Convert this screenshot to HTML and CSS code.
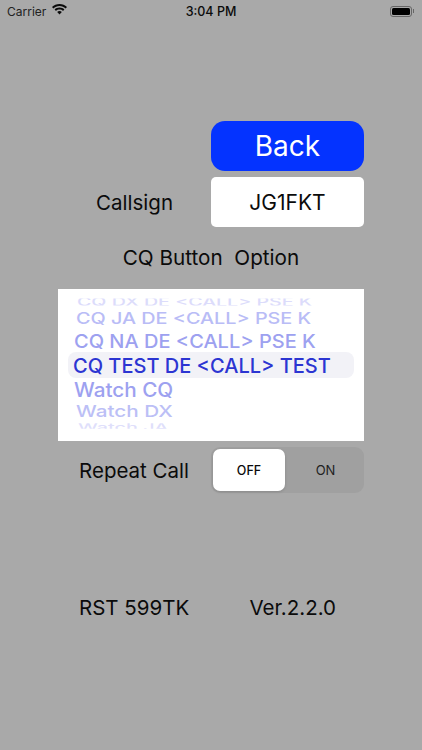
FILE: index.html
```html
<!DOCTYPE html>
<html lang="en">
<head>
    <meta charset="UTF-8">
    <meta name="viewport" content="width=device-width, initial-scale=1.0">
    <title>Settings</title>
    <link rel="stylesheet" href="styles.css">
</head>
<body>
    <div class="status">
        <div class="status-left">
            <span>Carrier</span>
            <svg class="wifi" width="15" height="11" viewBox="0 0 15 11">
                <path d="M7.500 0C4.600 0 2 1.100 0 3l1.400 1.500C3 3 5.100 2.100 7.500 2.100S12 3 13.600 4.500L15 3C13 1.100 10.400 0 7.500 0z"/>
                <path d="M7.500 3.600c-1.900 0-3.600.7-4.900 1.900l1.400 1.500c.9-.9 2.100-1.400 3.500-1.400s2.600.5 3.500 1.400l1.400-1.500C11.100 4.300 9.400 3.600 7.500 3.600z"/>
                <path d="M7.500 7.100c-.9 0-1.700.3-2.300.9l2.300 2.600L9.800 8c-.6-.6-1.400-.9-2.300-.9z"/>
            </svg>
        </div>
        <div class="status-time">3:04 PM</div>
        <div class="battery">
            <div class="battery-body"><div class="battery-fill"></div></div>
            <div class="battery-cap"></div>
        </div>
    </div>

    <div class="content">
        <div class="row row-back">
            <button class="back">Back</button>
        </div>
        <div class="row row-call">
            <div class="label label-call">Callsign</div>
            <div class="field">JG1FKT</div>
        </div>
        <div class="option-title">CQ Button&nbsp; Option</div>

        <div class="picker">
            <div class="selection"></div>
            <div class="wheel">
                <div class="item item-top3">CQ DX DE &lt;CALL&gt; PSE K</div>
                <div class="item item-top2">CQ JA DE &lt;CALL&gt; PSE K</div>
                <div class="item item-top1">CQ NA DE &lt;CALL&gt; PSE K</div>
                <div class="item item-sel">CQ TEST DE &lt;CALL&gt; TEST</div>
                <div class="item item-bot1">Watch CQ</div>
                <div class="item item-bot2">Watch DX</div>
                <div class="item item-bot3">Watch JA</div>
            </div>
        </div>

        <div class="row row-repeat">
            <div class="label label-repeat">Repeat Call</div>
            <div class="segment">
                <div class="seg seg-on">OFF</div>
                <div class="seg seg-off">ON</div>
            </div>
        </div>

        <div class="footer">
            <div>RST 599TK</div>
            <div>Ver.2.2.0</div>
        </div>
    </div>
</body>
</html>
```

FILE: styles.css
```css
*{
    padding: 0;
    margin: 0;
    box-sizing: border-box;
}
body{
    width: 422px;
    height: 750px;
    overflow: hidden;
    background-color: #a9a9a9;
    font-family: "Inter", "Liberation Sans", sans-serif;
    color: #0b0b0b;
}
.status{
    height: 22px;
    display: flex;
    justify-content: space-between;
    align-items: center;
    padding: 0 7px 0 7px;
    font-size: 12px;
    position: relative;
}
.status-left{
    display: flex;
    align-items: center;
    gap: 6px;
    color: #222;
}
.wifi{
    fill: #0b0b0b;
    margin-top: -3px;
}
.status-time{
    position: absolute;
    left: 0;
    right: 0;
    text-align: center;
    font-weight: 500;
    font-size: 12.5px;
}
.battery{
    display: flex;
    align-items: center;
    gap: 1px;
    margin-right: 1px;
}
.battery-body{
    width: 22px;
    height: 11px;
    border: 1px solid #666;
    border-radius: 3px;
    padding: 1px;
}
.battery-fill{
    height: 100%;
    background-color: #000;
    border-radius: 1.5px;
}
.battery-cap{
    width: 1px;
    height: 4px;
    background-color: #666;
}
.content{
    padding-top: 99px;
    display: flex;
    flex-direction: column;
}
.row{
    display: flex;
    align-items: center;
}
.row-back{
    justify-content: flex-end;
    padding-right: 58px;
}
.back{
    width: 153px;
    height: 50px;
    border: none;
    border-radius: 14px;
    background-color: #0433ff;
    color: #fff;
    font-family: inherit;
    font-size: 28px;
    font-weight: 400;
}
.row-call{
    margin-top: 6px;
    padding-right: 58px;
    justify-content: flex-end;
}
.label{
    font-size: 20.5px;
}
.label-call{
    margin-right: 38px;
}
.field{
    width: 153px;
    height: 50px;
    background-color: #fff;
    border-radius: 5px;
    display: flex;
    align-items: center;
    justify-content: center;
    font-size: 21px;
}
.option-title{
    margin-top: 19px;
    height: 24px;
    line-height: 24px;
    font-size: 20.7px;
    text-align: center;
}
.picker{
    position: relative;
    margin: 19px 58px 0;
    height: 152px;
    background-color: #fff;
    overflow: hidden;
}
.selection{
    position: absolute;
    left: 10px;
    right: 10px;
    top: 63px;
    height: 26px;
    border-radius: 8px;
    background-color: #f2f2f7;
}
.wheel{
    position: relative;
    padding-top: 7px;
    height: 152px;
    display: flex;
    flex-direction: column;
    font-weight: 500;
    white-space: nowrap;
}
.item{
    transform-origin: 0 50%;
    padding-left: 15px;
    font-size: 20px;
    line-height: 24px;
}
.item-top3{
    height: 12px;
    line-height: 12px;
    margin-left: 4px;
    color: #dcdcfb;
    font-size: 19.6px;
    overflow: hidden;
    transform: scaleY(.6);
}
.item-top2{
    height: 20px;
    line-height: 20px;
    margin-top: 0;
    margin-left: 3px;
    color: #b9bcf6;
    font-size: 19.8px;
    transform: scaleY(.8);
}
.item-top1{
    height: 24px;
    margin-top: 1px;
    margin-left: 1px;
    color: #9da1f0;
    font-size: 20px;
    transform: scaleY(.95);
}
.item-sel{
    height: 26px;
    line-height: 26px;
    margin-top: 0;
    color: #2c35d2;
    font-size: 20px;
}
.item-bot1{
    height: 24px;
    margin-top: -1px;
    margin-left: 1px;
    color: #9da1f0;
    font-size: 20.7px;
    transform: scaleY(.95);
}
.item-bot2{
    height: 20px;
    line-height: 20px;
    margin-top: -1px;
    margin-left: 3px;
    color: #bcbff6;
    font-size: 20.7px;
    transform: scaleY(.8);
}
.item-bot3{
    height: 10px;
    line-height: 14px;
    margin-top: 0;
    margin-left: 5px;
    color: #dfdffb;
    font-size: 19.8px;
    overflow: hidden;
    transform: scaleY(.55);
}
.row-repeat{
    margin-top: 6px;
    padding-right: 58px;
    justify-content: flex-end;
}
.label-repeat{
    margin-right: 22px;
}
.segment{
    width: 153px;
    height: 46px;
    padding: 2px;
    display: flex;
    border-radius: 9px;
    background-color: #a0a0a0;
}
.seg{
    display: flex;
    align-items: center;
    justify-content: center;
    font-size: 12.5px;
    font-weight: 500;
}
.seg-on{
    width: 72px;
    background-color: #fff;
    border-radius: 7px;
    box-shadow: 0 1px 3px rgba(0,0,0,.15);
}
.seg-off{
    flex: 1;
    padding-left: 4px;
    font-size: 13px;
    font-weight: 400;
    color: #222;
}
.footer{
    margin-top: 103px;
    padding: 0 86px 0 79px;
    display: flex;
    justify-content: space-between;
    font-size: 20.5px;
    line-height: 24px;
}
```
